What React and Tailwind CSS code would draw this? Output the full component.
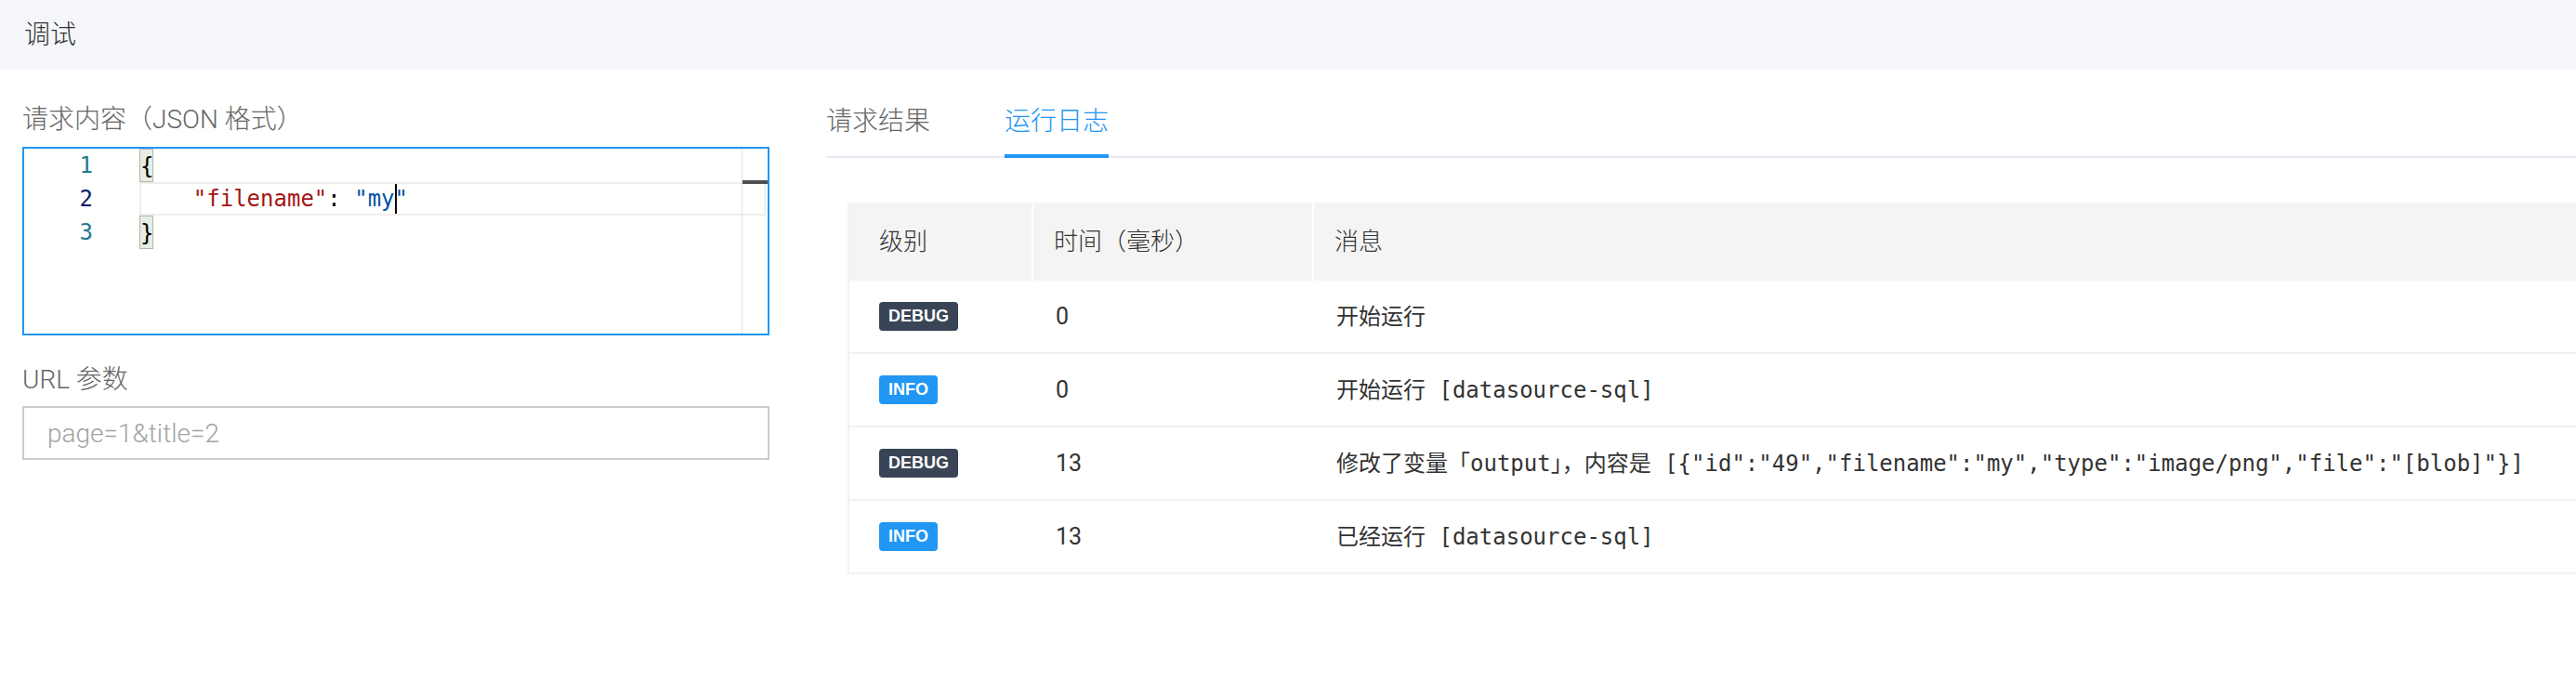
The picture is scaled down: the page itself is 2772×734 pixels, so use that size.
import React from "react";

const logs = [
    { level: "DEBUG", time: "0", msg: "开始运行" },
    { level: "INFO", time: "0", msg: "开始运行 [datasource-sql]" },
    { level: "DEBUG", time: "13", msg: '修改了变量「output」，内容是 [{"id":"49","filename":"my","type":"image/png","file":"[blob]"}]' },
    { level: "INFO", time: "13", msg: "已经运行 [datasource-sql]" },
];

function LevelBadge({ level }) {
    const color = level === "INFO" ? "bg-[#2196f3]" : "bg-[#394456]";
    return (
        <span className={`inline-block h-[31px] leading-[31px] px-[10px] rounded-[4px] text-white text-[18px] font-bold font-['Liberation_Sans',sans-serif] ${color}`}>
            {level}
        </span>
    );
}

function Bracket({ children }) {
    return (
        <span className="inline-block w-[15px] h-[36px] align-top box-border border border-[#b4b4b4] bg-[#e6eee4]">
            {children}
        </span>
    );
}

function CodeEditor() {
    return (
        <div className="relative h-[203px] border-2 border-[#2196f3] bg-[#fffffe] flex font-['DejaVu_Sans_Mono',monospace] font-normal text-[24px]">
            <div className="w-[74px] text-right">
                <div className="h-[36px] leading-[36px] text-[#237893]">1</div>
                <div className="h-[36px] leading-[36px] text-[#0b216f]">2</div>
                <div className="h-[36px] leading-[36px] text-[#237893]">3</div>
            </div>
            <div className="ml-[50px] flex-1">
                <div className="h-[36px] leading-[36px] whitespace-pre text-black">
                    <Bracket>{"{"}</Bracket>
                </div>
                <div className="h-[36px] leading-[36px] whitespace-pre outline-2 outline-[#eeeeee] -outline-offset-2 mr-[2px]">
                    {"    "}
                    <span className="text-[#a31515]">"filename"</span>
                    <span className="text-black">: </span>
                    <span className="text-[#0451a5]">"my</span>
                    <span className="inline-block w-[2px] h-[36px] bg-black align-top -mr-[2px]"></span>
                    <span className="text-[#0451a5]">"</span>
                </div>
                <div className="h-[36px] leading-[36px] whitespace-pre text-black">
                    <Bracket>{"}"}</Bracket>
                </div>
            </div>
            {/* overview ruler */}
            <div className="absolute top-0 bottom-0 right-0 w-[28px] border-l border-[#e2e2e2]">
                <div className="absolute left-0 right-0 top-[34px] h-[4px] bg-[#505050]"></div>
            </div>
        </div>
    );
}

export default function App() {
    return (
        <div className="w-[2772px] h-[734px] bg-white overflow-hidden font-light font-['Roboto','Noto_Sans_CJK_SC',sans-serif]">
            <div className="h-[75px] bg-[#f5f6fa] flex items-center px-[26px] text-[28px] text-[#333]">
                调试
            </div>

            <div className="flex">
                {/* left: request */}
                <div className="w-[804px] ml-[24px] shrink-0 pt-[34px]">
                    <div className="h-[40px] leading-[40px] text-[28px] text-[#666] mb-[9px]">请求内容（JSON 格式）</div>
                    <CodeEditor />
                    <div className="h-[40px] leading-[40px] text-[28px] text-[#666] mt-[28px] mb-[8px]">URL 参数</div>
                    <input
                        type="text"
                        placeholder="page=1&title=2"
                        className="w-full h-[58px] border-2 border-[#cccccc] px-[25px] text-[28px] font-light text-[#333] placeholder:text-[#a3a3a3] outline-none"
                    />
                </div>

                {/* right: result tabs */}
                <div className="flex-1 ml-[61px] min-w-0">
                    <div className="flex gap-[80px] border-b-2 border-[#e6eaf4] pt-[36px]">
                        <div className="h-[57px] pb-[17px] leading-[40px] text-[28px] text-[#666]">请求结果</div>
                        <div className="relative h-[57px] pb-[17px] leading-[40px] text-[28px] text-[#2196f3]">
                            运行日志
                            <div className="absolute left-0 right-0 -bottom-[2px] h-[4px] bg-[#2196f3]"></div>
                        </div>
                    </div>

                    <div className="mt-[48px] ml-[23px] border-l-2 border-[#f2f2f2]">
                        <div className="flex h-[84px] bg-[#f4f4f4] text-[26px] text-[#333]">
                            <div className="w-[198px] pl-[32px] flex items-center border-r-2 border-white">级别</div>
                            <div className="w-[302px] pl-[22px] flex items-center border-r-2 border-white">时间（毫秒）</div>
                            <div className="flex-1 pl-[22px] flex items-center">消息</div>
                        </div>
                        {logs.map((log, i) => (
                            <div key={i} className="flex h-[79px] border-b-2 border-[#f2f2f2] text-[#333]">
                                <div className="w-[198px] pl-[32px] flex items-center">
                                    <LevelBadge level={log.level} />
                                </div>
                                <div className="w-[302px] pl-[24px] flex items-center text-[25px] font-normal">{log.time}</div>
                                <div className="flex-1 pl-[24px] flex items-center whitespace-pre text-[24px] font-normal font-['DejaVu_Sans_Mono','Noto_Sans_CJK_SC',monospace]">
                                    {log.msg}
                                </div>
                            </div>
                        ))}
                    </div>
                </div>
            </div>
        </div>
    );
}
